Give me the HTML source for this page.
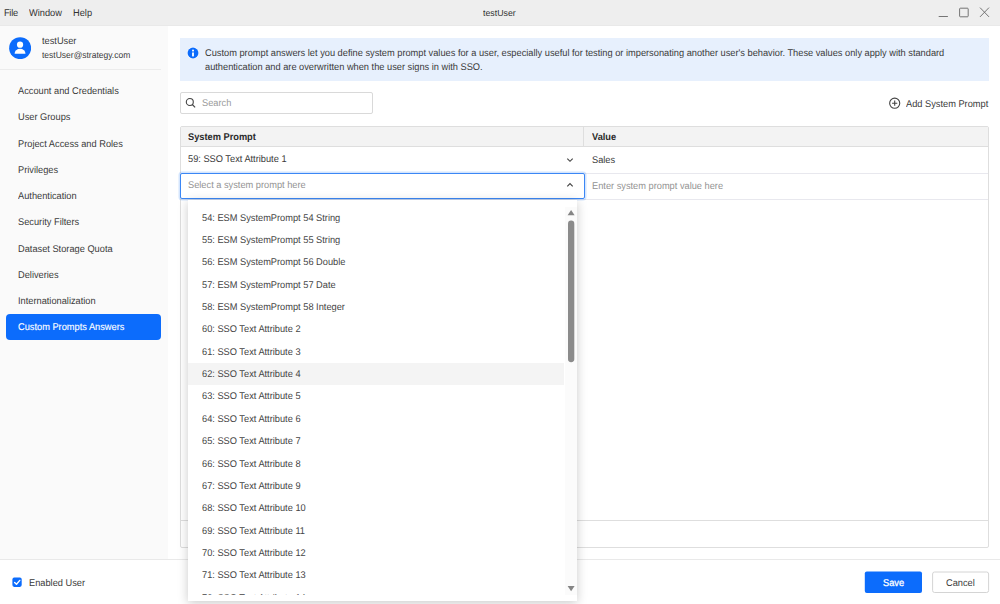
<!DOCTYPE html>
<html><head><meta charset="utf-8"><title>testUser</title>
<style>
*{box-sizing:border-box;margin:0;padding:0}
html,body{width:1000px;height:604px;overflow:hidden;background:#fff}
body{font-family:"Liberation Sans",sans-serif;font-size:9.8px;color:#3a3a3a;position:relative;text-rendering:geometricPrecision}
.abs{position:absolute}
#titlebar{left:0;top:0;width:1000px;height:26px;background:#eee;border-bottom:1px solid #e9e9e9;font-size:9.8px;color:#333;line-height:28px}
#titlebar span{position:absolute;top:0;transform:scaleX(.944);transform-origin:0 0;white-space:nowrap}
#sidebar{left:0;top:26px;width:168px;height:533px;background:#fafafa}
#footer{left:0;top:559px;width:1000px;height:45px;background:#fff;border-top:1px solid #e9e9e9}
.nav{position:absolute;left:18px;height:26px;line-height:26px;white-space:nowrap;color:#3a3a3a;transform:scaleX(.944);transform-origin:0 0}
#sel{left:6px;top:314px;width:154.700px;height:26px;background:#0c6cfc;border-radius:4px}
#banner{left:180px;top:38px;width:809px;height:43px;background:#e7f0fd;color:#3a3a3a;line-height:14px}
#search{left:180px;top:92px;width:193px;height:22px;border:1px solid #d9d9d9;border-radius:2px;background:#fff}
#table{left:180px;top:126px;width:809px;height:422px;border:1px solid #dedede;background:#fff;border-radius:2px}
#thead{left:181px;top:127px;width:807px;height:20px;background:#f3f3f3;border-bottom:1px solid #dedede}
.t{position:absolute;white-space:nowrap;line-height:14px;transform:scaleX(.944);transform-origin:0 0}
#dd{left:188px;top:200px;width:389px;height:401px;background:#fff;box-shadow:0 2px 10px rgba(0,0,0,.21);overflow:hidden}
#list{left:0;top:7px;width:389px;height:388px;overflow:hidden}
.opt{position:absolute;height:22px;line-height:22px;white-space:nowrap;color:#444;left:13.600px;transform:scaleX(.944);transform-origin:0 0}
.btn{position:absolute;top:571.5px;width:57px;height:21.5px;line-height:21.5px;text-align:center;border-radius:2px}
</style></head><body>
<div id="titlebar" class="abs">
<span style="left:4px;letter-spacing:-.3px">File</span><span style="left:28.7px">Window</span><span style="left:73.400px">Help</span>
<span style="left:483px;font-size:8.9px;line-height:27px;transform:scaleX(.99)">testUser</span>
<svg class="abs" style="left:930px;top:0" width="70" height="26" viewBox="0 0 70 26" fill="none" stroke="#666" stroke-width="0.9">
<path d="M8.700 16.500h9.200"/><rect x="29.600" y="8.200" width="8.600" height="8.600" rx=".8"/><path d="M50 7.600l9 9.300M59 7.600l-9 9.300"/></svg>
</div>
<div id="sidebar" class="abs"></div>
<svg class="abs" style="left:9px;top:36.600px" width="22.400" height="22.400" viewBox="0 0 22.400 22.400"><circle cx="11.150" cy="11.150" r="11" fill="#0c6cfc"/><circle cx="11.050" cy="7.700" r="3.100" fill="#fff"/><path d="M5.600 16.800A5.450 5 0 0 1 16.500 16.800z" fill="#fff"/></svg>
<div class="t" style="left:42px;top:35px;font-size:9.8px">testUser</div>
<div class="t" style="left:42px;top:48px;font-size:9px">testUser@strategy.com</div>
<div class="abs" style="left:0;top:69px;width:161px;height:1px;background:#ececec"></div>
<div id="sel" class="abs"></div>
<div class="nav" style="top:79px">Account and Credentials</div>
<div class="nav" style="top:105.25px">User Groups</div>
<div class="nav" style="top:131.5px">Project Access and Roles</div>
<div class="nav" style="top:157.75px">Privileges</div>
<div class="nav" style="top:184px">Authentication</div>
<div class="nav" style="top:210.25px">Security Filters</div>
<div class="nav" style="top:236.5px">Dataset Storage Quota</div>
<div class="nav" style="top:262.75px">Deliveries</div>
<div class="nav" style="top:289px">Internationalization</div>
<div class="nav" style="top:315.25px;color:#fff;-webkit-text-stroke:.12px #fff">Custom Prompts Answers</div>

<div id="banner" class="abs">
<svg class="abs" style="left:6.100px;top:7.700px" width="14" height="14" viewBox="0 0 14 14"><circle cx="7" cy="7" r="6.100" fill="#fff" opacity=".8"/><circle cx="7" cy="7" r="5.450" fill="#0c6cfc"/><rect x="6" y="3.700" width="2" height="1.700" fill="#fff" opacity=".92"/><rect x="6" y="6.500" width="2" height="3.900" fill="#fff" opacity=".92"/></svg>
<div class="t" style="left:25px;top:8.5px">Custom prompt answers let you define system prompt values for a user, especially useful for testing or impersonating another user's behavior. These values only apply with standard</div>
<div class="t" style="left:25px;top:22.5px">authentication and are overwritten when the user signs in with SSO.</div>
</div>

<div id="search" class="abs">
<svg class="abs" style="left:4px;top:3.800px" width="12" height="12" viewBox="0 0 12 12" fill="none" stroke="#444" stroke-width="1.100"><circle cx="4.800" cy="5" r="3.500"/><path d="M7.300 7.500l2.800 2.800"/></svg>
<div class="t" style="left:21px;top:3.8px;color:#9a9a9a">Search</div>
</div>
<svg class="abs" style="left:889px;top:97px" width="12" height="13" viewBox="0 0 12 13" fill="none" stroke="#444" stroke-width="1.100"><circle cx="5.700" cy="6.200" r="5.050"/><path d="M5.700 3.600v5.200M3.100 6.200h5.200"/></svg>
<div class="t" style="left:906px;top:97.500px">Add System Prompt</div>

<div id="table" class="abs"></div>
<div id="thead" class="abs"></div>
<div class="abs" style="left:583px;top:127px;width:1px;height:20px;background:#dedede"></div>
<div class="abs" style="left:181px;top:173px;width:807px;height:1px;background:#e8e8ee"></div>
<div class="abs" style="left:181px;top:199px;width:807px;height:1px;background:#e8e8ee"></div>
<div class="abs" style="left:181px;top:520px;width:807px;height:1px;background:#dedede"></div>
<div class="t" style="left:188px;top:130.6px;font-weight:bold;color:#2a2a2a">System Prompt</div>
<div class="t" style="left:592px;top:130.6px;font-weight:bold;color:#2a2a2a">Value</div>
<div class="t" style="left:188px;top:153px">59: SSO Text Attribute 1</div>
<div class="t" style="left:592px;top:154px">Sales</div>
<svg class="abs" style="left:566px;top:156.600px" width="8" height="6" viewBox="0 0 8 6" fill="none" stroke="#444" stroke-width="1.150"><path d="M1.300 1.600l2.700 2.700 2.700-2.700"/></svg>
<div class="abs" style="left:180px;top:173px;width:405px;height:26px;border:1px solid #3b87f5;border-radius:2px;box-shadow:0 0 0 1.5px rgba(59,135,245,.22)"></div>
<div class="t" style="left:188px;top:179px;color:#939393">Select a system prompt here</div>
<div class="t" style="left:592px;top:180.4px;color:#939393">Enter system prompt value here</div>
<svg class="abs" style="left:566px;top:182px" width="8" height="6" viewBox="0 0 8 6" fill="none" stroke="#444" stroke-width="1.150"><path d="M1.300 4.300l2.700-2.700 2.700 2.700"/></svg>

<div id="footer" class="abs"></div>
<svg class="abs" style="left:10px;top:575px" width="14" height="14" viewBox="0 0 14 14"><rect x="2.400" y="2.600" width="9.300" height="9.300" rx="1.800" fill="#0c6cfc"/><path d="M4.600 7.400l1.900 1.900 3.300-3.900" fill="none" stroke="#fff" stroke-width="1.400" stroke-linecap="round" stroke-linejoin="round"/></svg>
<div class="t" style="left:28.600px;top:577px">Enabled User</div>
<svg class="abs" style="left:860px;top:566px" width="135" height="32" viewBox="0 0 135 32"><rect x="4.800" y="5.500" width="57.200" height="21.500" rx="2" fill="#0c6cfc"/><rect x="72.600" y="6" width="56" height="20.500" rx="2" fill="#fff" stroke="#d4d4d4" stroke-width="1"/></svg><div class="t" style="left:883.400px;top:576.5px;color:#fff;-webkit-text-stroke:.3px #fff">Save</div>
<div class="t" style="left:946.200px;top:576.5px">Cancel</div>

<div id="dd" class="abs">
<div id="list" class="abs">
<div class="abs" style="left:0;top:156px;width:376.400px;height:22px;background:#f4f4f4"></div>
<div class="abs" style="left:377.300px;top:0;width:11.700px;height:388px;background:#fbfbfb"></div>
<div class="opt" style="top:1px">54: ESM SystemPrompt 54 String</div>
<div class="opt" style="top:23px">55: ESM SystemPrompt 55 String</div>
<div class="opt" style="top:45px">56: ESM SystemPrompt 56 Double</div>
<div class="opt" style="top:68px">57: ESM SystemPrompt 57 Date</div>
<div class="opt" style="top:90px">58: ESM SystemPrompt 58 Integer</div>
<div class="opt" style="top:112px">60: SSO Text Attribute 2</div>
<div class="opt" style="top:135px">61: SSO Text Attribute 3</div>
<div class="opt" style="top:157px">62: SSO Text Attribute 4</div>
<div class="opt" style="top:179px">63: SSO Text Attribute 5</div>
<div class="opt" style="top:202px">64: SSO Text Attribute 6</div>
<div class="opt" style="top:224px">65: SSO Text Attribute 7</div>
<div class="opt" style="top:247px">66: SSO Text Attribute 8</div>
<div class="opt" style="top:269px">67: SSO Text Attribute 9</div>
<div class="opt" style="top:291px">68: SSO Text Attribute 10</div>
<div class="opt" style="top:314px">69: SSO Text Attribute 11</div>
<div class="opt" style="top:336px">70: SSO Text Attribute 12</div>
<div class="opt" style="top:358px">71: SSO Text Attribute 13</div>
<div class="opt" style="top:381px">72: SSO Text Attribute 14</div>
<svg class="abs" style="left:377px;top:0" width="12" height="388" viewBox="0 0 12 388"><path d="M2.600 8.300l3.500-5.400 3.500 5.400z" fill="#858585"/><rect x="3" y="13.500" width="6.300" height="141.700" rx="3.150" fill="#8b8b8b"/><path d="M2.600 378.900l3.500 5.300 3.500-5.300z" fill="#858585"/></svg>
</div>
</div>
</body></html>
